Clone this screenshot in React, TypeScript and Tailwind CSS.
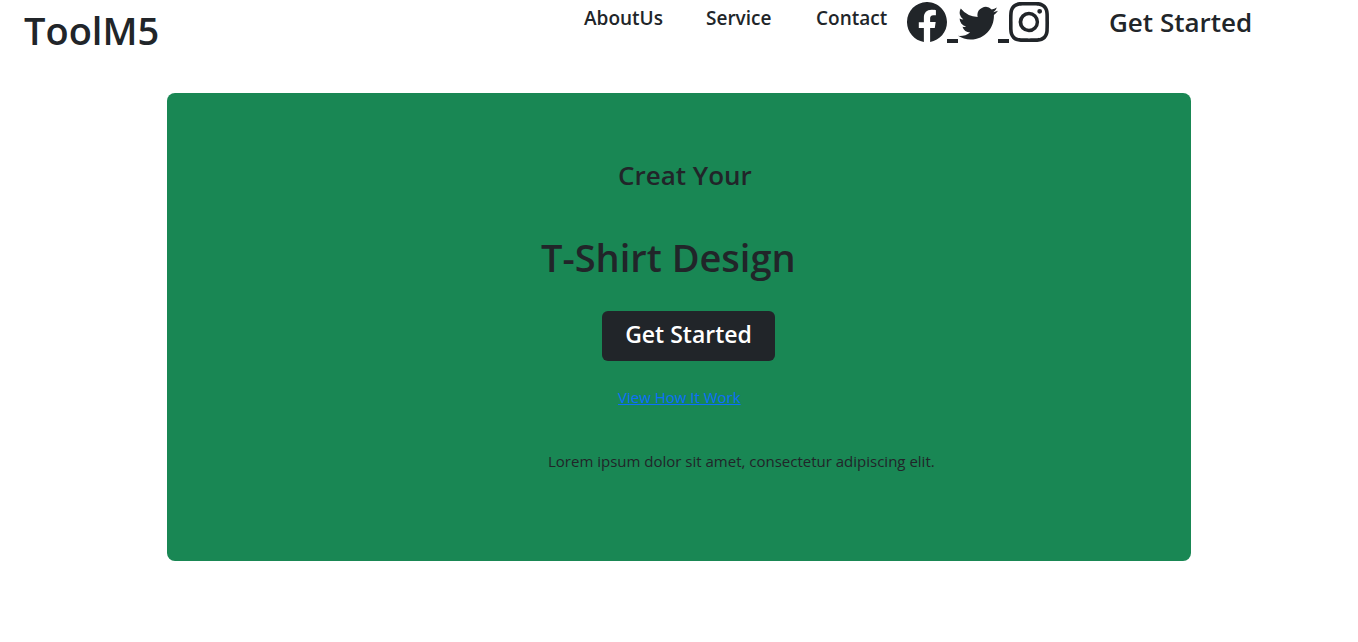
import { BsFacebook, BsInstagram, BsTwitter } from "react-icons/bs";

export default function App() {
  return (
    <div className="bg-white font-['Open_Sans','Noto_Sans',sans-serif] text-base text-[#212529]">
      <header className="flex items-start justify-between pl-6">
        <h1 className="pt-1.5 text-[38px] leading-12 font-semibold">ToolM5</h1>
        <div className="flex items-start">
          <nav aria-label="Main" className="flex pt-1.5 text-[19px] leading-6 font-semibold">
            <a href="#about" className="w-[122px]">AboutUs</a>
            <a href="#service" className="w-[110px]">Service</a>
            <a href="#contact" className="w-[91px]">Contact</a>
          </nav>
          <div className="flex items-start pt-0.5">
            <a href="#facebook" aria-label="Facebook" className="flex items-end">
              <BsFacebook className="size-10" />
              <span className="-mb-px h-1 w-[11px] bg-[#212529]" />
            </a>
            <a href="#twitter" aria-label="Twitter" className="flex items-end">
              <BsTwitter className="size-10" />
              <span className="-mb-px h-1 w-[11px] bg-[#212529]" />
            </a>
            <a href="#instagram" aria-label="Instagram">
              <BsInstagram className="size-10" />
            </a>
          </div>
          <a href="#start" className="ml-15 w-[249px] pt-1.5 text-[26px] leading-8 font-semibold">Get Started</a>
        </div>
      </header>
      <main className="mx-auto mt-[39px] flex max-w-5xl flex-col items-start rounded-lg bg-[#198754] pt-16 pb-[86px]">
        <h3 className="ml-[451px] text-[26px] leading-9 font-semibold">Creat Your</h3>
        <h1 className="mt-10 ml-[374px] text-[38px] leading-12 font-semibold">T-Shirt Design</h1>
        <button type="button" className="mt-[30px] ml-[435px] h-[50px] w-[173px] rounded-md bg-[#212529] pb-1 text-[23px] font-semibold text-white">
          Get Started
        </button>
        <a href="#how" className="mt-6 ml-[451px] text-[15px] leading-6 text-[#0d6efd] underline">View How It Work</a>
        <p className="mt-10 ml-[381px] pb-0.5 text-[15px] leading-6">Lorem ipsum dolor sit amet, consectetur adipiscing elit.</p>
      </main>
    </div>
  );
}
